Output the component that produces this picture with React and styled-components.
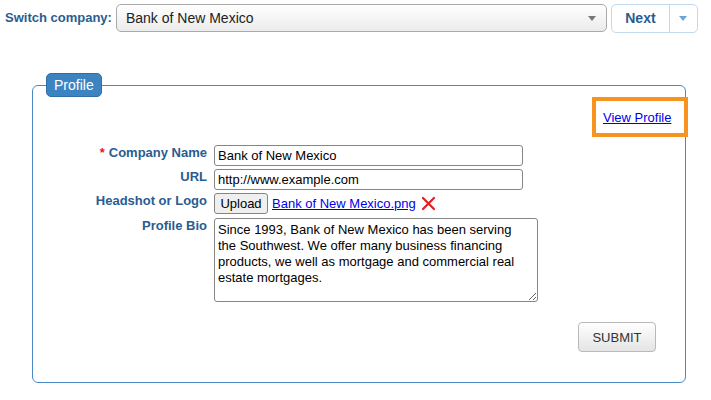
import React from "react";
import styled, { createGlobalStyle } from "styled-components";

const Global = createGlobalStyle`
  html, body { margin: 0; padding: 0; background: #fff; }
  body { font-family: "Liberation Sans", Arial, sans-serif; color: #000; }
  * { box-sizing: border-box; }
`;

const Page = styled.div`
  width: 711px;
  height: 400px;
  overflow: hidden;
`;

const TopBar = styled.div`
  display: flex;
  align-items: flex-start;
  padding: 4px 0 0 5px;
  height: 33px;
`;

const TopLabel = styled.label`
  font-size: 13px;
  font-weight: bold;
  color: #2a5c91;
  line-height: 28px;
  margin-right: 4px;
`;

const Select = styled.div`
  position: relative;
  width: 491px;
  height: 28px;
  border: 1px solid #a9a9a9;
  border-radius: 5px;
  background: linear-gradient(#ffffff, #ebebeb);
  font-size: 14px;
  line-height: 26px;
  padding-left: 9px;
  color: #222;
  display: flex;
  align-items: center;
  justify-content: space-between;
  padding-right: 10px;
`;

const Caret = styled.span`
  width: 0;
  height: 0;
  border-left: 4px solid transparent;
  border-right: 4px solid transparent;
  border-top: 5px solid ${(p) => p.$color || "#777"};
`;

const NextGroup = styled.div`
  display: flex;
  margin-left: 4px;
  height: 29px;
  border: 1px solid #c3daee;
  border-radius: 5px;
  background: #fff;
`;

const NextBtn = styled.div`
  width: 58px;
  font-size: 14px;
  font-weight: bold;
  color: #2a5c91;
  line-height: 27px;
  text-align: center;
  border-right: 1px solid #c3daee;
`;

const NextArrow = styled.div`
  width: 27px;
  display: flex;
  align-items: center;
  justify-content: center;
`;

const Fieldset = styled.fieldset`
  margin: 40px 0 0 32px;
  width: 654px;
  min-width: 0;
  padding: 0 29px 30px 0;
  border: 1px solid #4a8ac4;
  border-radius: 6px;
`;

const Legend = styled.legend`
  margin-left: 13px;
  padding: 0 7px;
  height: 24px;
  line-height: 22px;
  background: #3c84c1;
  border: 1px solid #2f6ea7;
  border-radius: 5px;
  color: #fff;
  font-size: 14px;
`;

const ViewRow = styled.div`
  display: flex;
  justify-content: flex-end;
  margin-right: -32px;
`;

const Highlight = styled.div`
  width: 96px;
  height: 40px;
  border: 4px solid #f7931e;
  display: flex;
  align-items: center;
  padding-left: 7px;
`;

const Link = styled.a`
  font-size: 13px;
  color: #0000ee;
  text-decoration: underline;
  cursor: pointer;
`;

const FormGrid = styled.div`
  display: grid;
  grid-template-columns: 174px auto;
  column-gap: 7px;
  row-gap: 3px;
  margin-top: 8px;
`;

const Label = styled.div`
  text-align: right;
  font-size: 13px;
  font-weight: bold;
  line-height: 15px;
  color: #2a5c91;
  margin-top: ${(p) => p.$top || 0}px;
`;

const Req = styled.span`
  color: #e8141c;
  margin-right: 4px;
`;

const Input = styled.input`
  width: 309px;
  height: 21px;
  border: 1px solid #858585;
  border-radius: 3px;
  padding: 0 3px;
  font-family: "Liberation Sans", Arial, sans-serif;
  font-size: 13px;
  color: #000;
  outline: none;
`;

const FileRow = styled.div`
  display: flex;
  align-items: center;
  gap: 4px;
  height: 21px;
`;

const UploadBtn = styled.button`
  width: 54px;
  height: 21px;
  padding: 0;
  border: 1px solid #858585;
  border-radius: 3px;
  background: #efefef;
  font-family: "Liberation Sans", Arial, sans-serif;
  font-size: 13px;
  color: #000;
`;

const Remove = styled.svg`
  margin-left: 1px;
`;

const TextArea = styled.textarea`
  width: 324px;
  height: 84px;
  margin-top: ${(p) => p.$top || 0}px;
  border: 1px solid #858585;
  border-radius: 3px;
  padding: 3px 10px 3px 3px;
  font-family: "Liberation Sans", Arial, sans-serif;
  font-size: 13px;
  line-height: 16px;
  color: #000;
  resize: both;
  outline: none;
  display: block;
`;

const SubmitRow = styled.div`
  display: flex;
  justify-content: flex-end;
  margin-top: 20px;
`;

const SubmitBtn = styled.button`
  width: 78px;
  height: 30px;
  border: 1px solid #b9b9b9;
  border-radius: 4px;
  background: linear-gradient(#ffffff, #e4e4e4);
  font-family: "Liberation Sans", Arial, sans-serif;
  font-size: 13px;
  color: #333;
  padding: 0;
`;

export default function App() {
  return (
    <Page>
      <Global />
      <TopBar>
        <TopLabel>Switch company:</TopLabel>
        <Select>
          <span>Bank of New Mexico</span>
          <Caret />
        </Select>
        <NextGroup>
          <NextBtn>Next</NextBtn>
          <NextArrow>
            <Caret $color="#6ea4d6" />
          </NextArrow>
        </NextGroup>
      </TopBar>
      <Fieldset>
        <Legend>Profile</Legend>
        <ViewRow>
          <Highlight>
            <Link>View Profile</Link>
          </Highlight>
        </ViewRow>
        <FormGrid>
          <Label>
            <Req>*</Req>Company Name
          </Label>
          <Input defaultValue="Bank of New Mexico" />
          <Label>URL</Label>
          <Input defaultValue="http://www.example.com" />
          <Label>Headshot or Logo</Label>
          <FileRow>
            <UploadBtn>Upload</UploadBtn>
            <Link>Bank of New Mexico.png</Link>
            <Remove width="15" height="15" viewBox="0 0 15 15">
              <path d="M2 2 L13 13 M13 2 L2 13" stroke="#e02020" strokeWidth="2.2" strokeLinecap="round" />
            </Remove>
          </FileRow>
          <Label $top={1}>Profile Bio</Label>
          <TextArea
            $top={1}
            defaultValue="Since 1993, Bank of New Mexico has been serving the Southwest. We offer many business financing products, we well as mortgage and commercial real estate mortgages."
          />
        </FormGrid>
        <SubmitRow>
          <SubmitBtn>SUBMIT</SubmitBtn>
        </SubmitRow>
      </Fieldset>
    </Page>
  );
}
